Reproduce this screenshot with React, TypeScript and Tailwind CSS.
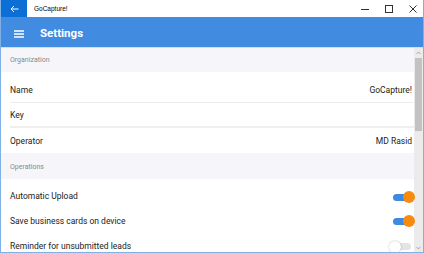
import React from "react";

function Toggle({ on }: { on: boolean }) {
  return (
    <div className="relative w-[20px] h-[12px] flex items-center">
      <div className={`w-[18px] h-[7px] rounded-full ${on ? "bg-[#3d8ae0]" : "bg-[#e4e4e4]"}`} />
      <div
        className={`absolute top-0 w-[12px] h-[12px] rounded-full ${
          on ? "right-[-2px] bg-[#f68b0f]" : "left-[-4px] bg-white shadow-[0_0_2px_rgba(0,0,0,0.3)]"
        }`}
      />
    </div>
  );
}

function Row({ label, value }: { label: string; value?: string }) {
  return (
    <div className="flex items-center justify-between pr-[2px] w-full">
      <span className="text-[8.5px] text-[#222]">{label}</span>
      {value && <span className="text-[8.5px] text-[#222]">{value}</span>}
    </div>
  );
}

export default function App() {
  return (
    <div className="w-[424px] h-[253px] bg-white overflow-hidden relative font-['Roboto',sans-serif] border-x border-b border-[#7fb1e6]">
      {/* title bar */}
      <div className="h-[17px] flex items-center bg-white">
        <div className="w-[26px] h-[17px] bg-[#0b6fd6] flex items-center justify-center">
          <svg width="9" height="8" viewBox="0 0 9 8" fill="none" stroke="white" strokeWidth="1">
            <path d="M8.5 4H1M4 1L1 4l3 3" />
          </svg>
        </div>
        <span className="ml-[7px] text-[6.5px] text-black font-['Liberation_Sans',sans-serif]">GoCapture!</span>
        <div className="ml-auto flex items-center gap-[16px] pr-[6px]">
          <svg width="8" height="8" viewBox="0 0 8 8" stroke="#333" strokeWidth="1"><path d="M0 4.5h8" /></svg>
          <svg width="8" height="8" viewBox="0 0 8 8" fill="none" stroke="#333" strokeWidth="1"><rect x="0.5" y="0.5" width="7" height="7" /></svg>
          <svg width="8" height="8" viewBox="0 0 8 8" stroke="#333" strokeWidth="1"><path d="M0.5 0.5l7 7M7.5 0.5l-7 7" /></svg>
        </div>
      </div>

      {/* app header */}
      <div className="h-[31px] bg-[#418ce0] flex items-center pt-[3px] border-b border-[#d8dde6]">
        <svg className="ml-[13px]" width="10" height="8" viewBox="0 0 10 8" stroke="white" strokeWidth="1.3">
          <path d="M0 1h10M0 4h10M0 7h10" />
        </svg>
        <span className="ml-[16px] text-[11.5px] font-bold text-white">Settings</span>
      </div>

      <div className="flex h-[205px]">
        <div className="flex-1 flex flex-col">
          <div className="h-[24px] shrink-0 bg-[#f6f6fa] flex items-center pl-[9px]">
            <span className="text-[7px] text-[#888]">Organization</span>
          </div>
          <div className="h-[31px] shrink-0 ml-[9px] flex items-center pt-[7px] border-b border-[#ececec]">
            <Row label="Name" value="GoCapture!" />
          </div>
          <div className="h-[25px] shrink-0 ml-[9px] flex items-center pt-[2px] border-b-[2px] border-[#efefef]">
            <Row label="Key" />
          </div>
          <div className="h-[25px] shrink-0 ml-[9px] flex items-center pt-[2px]">
            <Row label="Operator" value="MD Rasid" />
          </div>
          <div className="h-[26px] shrink-0 bg-[#f6f6fa] flex items-center pl-[9px] pt-[2px]">
            <span className="text-[7px] text-[#888]">Operations</span>
          </div>
          <div className="flex flex-col">
            <div className="h-[29px] shrink-0 flex items-end pb-[5px] justify-between pl-[9px] pr-[1px]">
              <span className="text-[8.5px] text-[#222]">Automatic Upload</span>
              <Toggle on />
            </div>
            <div className="h-[25px] shrink-0 flex items-center pt-[1px] justify-between pl-[9px] pr-[1px]">
              <span className="text-[8.5px] text-[#222]">Save business cards on device</span>
              <Toggle on />
            </div>
            <div className="h-[25px] shrink-0 flex items-center pt-[2px] justify-between pl-[9px] pr-[1px]">
              <span className="text-[8.5px] text-[#222]">Reminder for unsubmitted leads</span>
              <Toggle on={false} />
            </div>
          </div>
        </div>
        {/* scrollbar */}
        <div className="w-[9px] bg-[#ebebeb] flex flex-col items-center">
          <svg className="mt-[3px]" width="5" height="4" viewBox="0 0 5 4" fill="none" stroke="#999" strokeWidth="0.8"><path d="M0.5 3L2.5 1l2 2" /></svg>
          <div className="mt-[3px] w-[7px] h-[73px] bg-[#c2c2c2]" />
          <div className="flex-1" />
          <svg className="mb-[3px]" width="5" height="4" viewBox="0 0 5 4" fill="none" stroke="#999" strokeWidth="0.8"><path d="M0.5 1L2.5 3l2-2" /></svg>
        </div>
      </div>
    </div>
  );
}
